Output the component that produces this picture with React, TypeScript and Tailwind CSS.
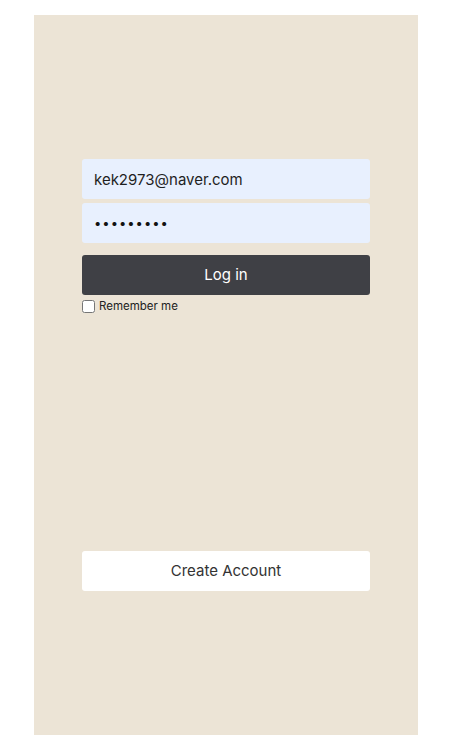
import React from "react";

export default function App() {
  return (
    <div className="w-[449px] h-[751px] bg-white" style={{ fontFamily: "Inter, 'Noto Sans', sans-serif" }}>
      <div className="ml-[34px] pt-[15px]">
        <div className="w-[384px] h-[720px] bg-[#ece4d6] px-12 pt-[144px] flex flex-col">
          <div className="flex flex-col gap-1">
            <input
              type="text"
              readOnly
              defaultValue="kek2973@naver.com"
              className="h-10 w-full rounded-[3px] bg-[#e8f0fe] px-3 text-[15px] text-[#1f1f1f] outline-none"
            />
            <input
              type="password"
              readOnly
              defaultValue="123456789"
              className="h-10 w-full rounded-[3px] bg-[#e8f0fe] px-3 text-[13px] tracking-[1px] text-[#111] outline-none"
            />
          </div>
          <button className="mt-3 h-10 w-full rounded-[3px] bg-[#3f4045] text-[15px] text-white">Log in</button>
          <label className="mt-[5px] flex h-[13px] items-center gap-1 text-[11.5px] leading-[13px] text-[#222]">
            <input type="checkbox" className="m-0 h-[13px] w-[13px]" />
            <span>Remember me</span>
          </label>
          <button className="mt-[238px] h-10 w-full rounded-[3px] bg-white text-[15px] text-[#333]">Create Account</button>
        </div>
      </div>
    </div>
  );
}
